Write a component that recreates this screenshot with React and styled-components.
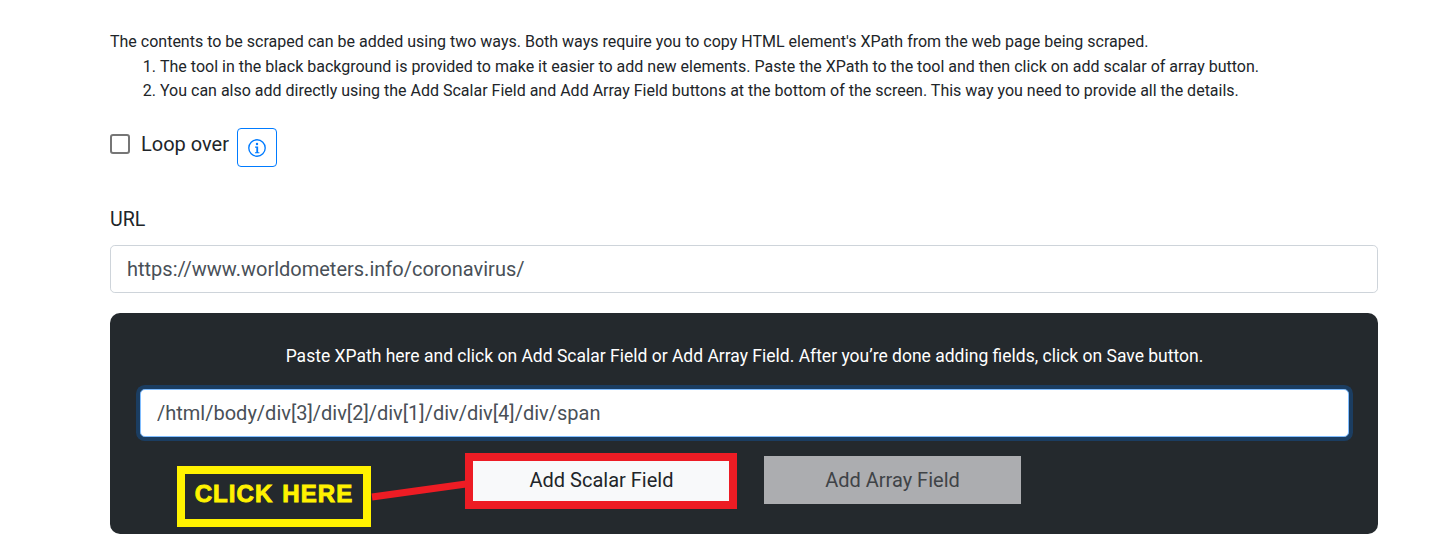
import styled, { createGlobalStyle } from "styled-components";

const GlobalStyle = createGlobalStyle`
  html, body {
    margin: 0;
    background: #fff;
  }
  body {
    font-family: Roboto, "Liberation Sans", sans-serif;
    color: #212529;
    height: 538px;
    overflow: hidden;
  }
`;

const Page = styled.div`
  padding: 30px 78px 0 110px;
`;

const Intro = styled.p`
  margin: 0;
  font-size: 16px;
  line-height: 24px;
`;

const Steps = styled.ol`
  margin: 1px 0 0;
  padding-left: 50px;
  font-size: 16px;
  line-height: 24px;
`;

const LoopRow = styled.div`
  display: flex;
  align-items: center;
  margin-top: 25px;
  height: 39px;
`;

const CheckBox = styled.span`
  display: block;
  box-sizing: border-box;
  width: 20px;
  height: 20px;
  border: 2px solid #767676;
  border-radius: 3px;
  margin-top: -7px;
`;

const CheckLabel = styled.label`
  font-size: 20px;
  margin-left: 11px;
  margin-top: -7px;
`;

const InfoButton = styled.button`
  display: flex;
  align-items: center;
  justify-content: center;
  box-sizing: border-box;
  width: 40px;
  height: 39px;
  margin-left: 8px;
  padding: 0;
  background: #fff;
  border: 1px solid #007bff;
  border-radius: 4px;
  color: #007bff;
`;

const FieldLabel = styled.label`
  display: block;
  margin-top: 40px;
  font-size: 19.6px;
  line-height: 26px;
`;

const TextInput = styled.input`
  display: block;
  box-sizing: border-box;
  width: 100%;
  height: 48px;
  margin-top: 12px;
  padding: 0 16px;
  border: 1px solid #ced4da;
  border-radius: 4.8px;
  background: #fff;
  color: #495057;
  font-family: inherit;
  font-size: 20px;
  outline: none;
`;

const Panel = styled.section`
  position: relative;
  box-sizing: border-box;
  height: 221px;
  margin-top: 20px;
  padding: 32px 29px 0 30px;
  background: #24292d;
  border-radius: 10px;
`;

const PanelNote = styled.p`
  margin: 0;
  color: #fff;
  font-size: 17.5px;
  line-height: 22px;
  text-align: center;
`;

const XPathInput = styled(TextInput)`
  margin-top: 22px;
  border-color: #80bdff;
  box-shadow: 0 0 0 4px rgba(0, 123, 255, 0.25);
`;

const ButtonRow = styled.div`
  display: flex;
  gap: 34px;
  margin-top: 19px;
  padding-left: 333px;
`;

const ActionButton = styled.button`
  box-sizing: border-box;
  width: 257px;
  height: 48px;
  padding: 0;
  border: none;
  background: ${(p) => (p.$muted ? "#acadb0" : "#f8f9fa")};
  color: ${(p) => (p.$muted ? "#3f4347" : "#212529")};
  font-family: inherit;
  font-size: 20px;
`;

const ClickNote = styled.div`
  position: absolute;
  left: 67px;
  top: 153px;
  box-sizing: border-box;
  width: 194px;
  height: 61px;
  padding-bottom: 6px;
  display: flex;
  align-items: center;
  justify-content: center;
  border: 8px solid #fff200;
  color: #fff200;
  font-family: "Liberation Sans", Arial, sans-serif;
  font-size: 24px;
  font-weight: 700;
  letter-spacing: 1.1px;
  word-spacing: 1px;
  -webkit-text-stroke: 0.9px #fff200;
`;

const RedFrame = styled.div`
  position: absolute;
  left: 355px;
  top: 140px;
  box-sizing: border-box;
  width: 272px;
  height: 56px;
  border: 8px solid #ed1c24;
  pointer-events: none;
`;

const Connector = styled.svg`
  position: absolute;
  left: 260px;
  top: 165px;
  overflow: visible;
`;

function InfoIcon() {
  return (
    <svg width="18" height="18" viewBox="0 0 16 16">
      <circle
        cx="8"
        cy="8"
        r="7.3"
        fill="none"
        stroke="currentColor"
        strokeWidth="1.2"
      />
      <circle cx="8" cy="4.4" r="1.05" fill="currentColor" />
      <path
        d="M6.3 6.7h2.7v5h1.1v1H6.2v-1h1.2V7.7H6.3z"
        fill="currentColor"
      />
    </svg>
  );
}

export default function App() {
  return (
    <>
      <GlobalStyle />
      <Page>
        <Intro>
          The contents to be scraped can be added using two ways. Both ways
          require you to copy HTML element's XPath from the web page being
          scraped.
        </Intro>
        <Steps>
          <li>
            The tool in the black background is provided to make it easier to
            add new elements. Paste the XPath to the tool and then click on add
            scalar of array button.
          </li>
          <li>
            You can also add directly using the Add Scalar Field and Add Array
            Field buttons at the bottom of the screen. This way you need to
            provide all the details.
          </li>
        </Steps>

        <LoopRow>
          <CheckBox />
          <CheckLabel>Loop over</CheckLabel>
          <InfoButton>
            <InfoIcon />
          </InfoButton>
        </LoopRow>

        <FieldLabel>URL</FieldLabel>
        <TextInput
          readOnly
          value="https://www.worldometers.info/coronavirus/"
        />

        <Panel>
          <PanelNote>
            Paste XPath here and click on Add Scalar Field or Add Array Field.
            After you’re done adding fields, click on Save button.
          </PanelNote>
          <XPathInput
            readOnly
            value="/html/body/div[3]/div[2]/div[1]/div/div[4]/div/span"
          />
          <ButtonRow>
            <ActionButton>Add Scalar Field</ActionButton>
            <ActionButton $muted>Add Array Field</ActionButton>
          </ButtonRow>
          <Connector width="100" height="20">
            <line
              x1="2"
              y1="19"
              x2="96"
              y2="6"
              stroke="#ed1c24"
              strokeWidth="7"
            />
          </Connector>
          <ClickNote>CLICK HERE</ClickNote>
          <RedFrame />
        </Panel>
      </Page>
    </>
  );
}
